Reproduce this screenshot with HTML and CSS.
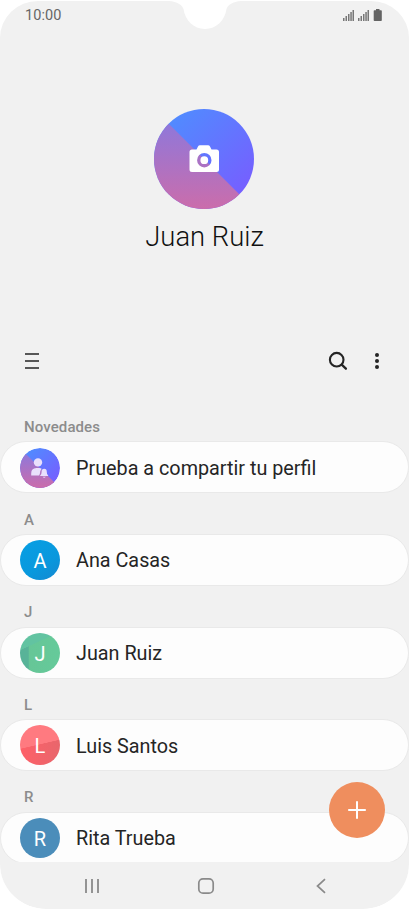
FILE: index.html
```html
<!DOCTYPE html>
<html lang="es">
<head>
<meta charset="utf-8">
<title>Contactos</title>
<link rel="stylesheet" href="styles.css">
</head>
<body>
<div class="phone">
  <svg class="notch" width="90" height="32" viewBox="0 0 90 32"><path d="M0 0H90V.8H84C76 .8 68.500 3.500 66.500 9C65 20 56.500 29 45 29S25 20 23.500 9C21.500 3.500 14 .8 6 .8H0Z" fill="#fff"/></svg>
  <header class="status">
    <span class="clock">10:00</span>
    <svg class="signals" width="42" height="14" viewBox="0 0 42 14">
      <g fill="#777"><path d="M1 10h1.500v3H1zM3.500 8H5v5H3.500zM6 6h1.500v7H6zM8.300 4h1.500v9H8.300zM10.500 2H12v11h-1.500z"/><path d="M16 10h1.500v3H16zM18.500 8H20v5h-1.500zM21 6h1.500v7H21zM23.300 4h1.500v9h-1.500zM25.500 2H27v11h-1.500z"/></g>
      <path d="M34 1h3.500v1.300h1.500q.8 0 .8.800v9.100q0 .8-.8.800h-6.500q-.8 0-.8-.8V3.100q0-.8.800-.8H34z" fill="#636363"/>
    </svg>
  </header>
  <section class="profile">
    <svg class="photo" width="100" height="100" viewBox="0 0 100 100">
      <defs>
        <linearGradient id="blue" x1="0" y1="0" x2="1" y2="1"><stop offset=".1" stop-color="#4f8dff"/><stop offset=".85" stop-color="#7560ff"/></linearGradient>
        <linearGradient id="pink" x1="0" y1="0" x2="0" y2="1"><stop offset="0" stop-color="#8579e2"/><stop offset="1" stop-color="#cb6dab"/></linearGradient>
        <clipPath id="round"><circle cx="50" cy="50" r="50"/></clipPath>
      </defs>
      <g clip-path="url(#round)"><path d="M0 0H100V100H0Z" fill="url(#blue)"/><path d="M0 0V100H100Z" fill="url(#pink)"/></g>
      <path fill="#fff" fill-rule="evenodd" d="M42.500 40.500l1.500-3q.6-1.200 2-1.200h8q1.400 0 2 1.200l1.500 3h5q2.500 0 2.500 2.500v17.500q0 2.500-2.500 2.500h-24.500q-2.500 0-2.500-2.500v-17.500q0-2.500 2.500-2.500zM50.300 44a7.200 7.200 0 1 0 0 14.400a7.200 7.200 0 1 0 0-14.400zM50.300 47.300a3.900 3.900 0 1 1 0 7.800a3.900 3.900 0 1 1 0-7.800z"/>
    </svg>
    <h1>Juan Ruiz</h1>
  </section>
  <nav class="toolbar">
    <svg width="16" height="18" viewBox="0 0 16 18"><path d="M1 2h14M1 9h14M1 16h14" stroke="#252525" stroke-width="1.400"/></svg>
    <span class="actions">
      <svg width="20" height="20" viewBox="0 0 20 20" fill="none" stroke="#252525"><circle cx="8.700" cy="8.700" r="6.800" stroke-width="2.100"/><path d="M13.700 13.700l4.200 4" stroke-width="2.300" stroke-linecap="round"/></svg>
      <svg width="6" height="20" viewBox="0 0 6 20" fill="#252525"><circle cx="3" cy="4" r="2"/><circle cx="3" cy="10" r="2"/><circle cx="3" cy="16" r="2"/></svg>
    </span>
  </nav>
  <main class="contacts">
    <h2>Novedades</h2>
    <div class="card">
      <svg class="avatar" viewBox="0 0 100 100"><g clip-path="url(#round)"><path d="M0 0H100V100H0Z" fill="url(#blue)"/><path d="M0 0V100H100Z" fill="url(#pink)"/></g><g fill="#e9e0fc"><circle cx="45" cy="36" r="10.500"/><path d="M28 69V63Q28 51 41 50H48Q52 50 54 52Q50 57 50 63L48 69Z"/><path d="M50 70Q54 67 54 60Q54 52 60.500 52T67 60Q67 67 71 70ZM56.500 72H64.500Q60.500 77 56.500 72Z"/></g></svg>
      <span class="name">Prueba a compartir tu perfil</span>
    </div>
    <h2>A</h2>
    <div class="card"><span class="avatar ana">A</span><span class="name">Ana Casas</span></div>
    <h2>J</h2>
    <div class="card"><span class="avatar juan">J</span><span class="name">Juan Ruiz</span></div>
    <h2>L</h2>
    <div class="card"><span class="avatar luis">L</span><span class="name">Luis Santos</span></div>
    <h2>R</h2>
    <div class="card"><span class="avatar rita">R</span><span class="name">Rita Trueba</span></div>
  </main>
  <div class="add"><svg width="20" height="20" viewBox="0 0 20 20"><path d="M10 1.200v17.600M1.200 10h17.600" stroke="#fff" stroke-width="2"/></svg></div>
  <footer class="keys">
    <svg width="16" height="18" viewBox="0 0 16 18"><path d="M2 2v14M8 2v14M14 2v14" stroke="#8a8a8a" stroke-width="1.800"/></svg>
    <svg class="home" width="18" height="18" viewBox="0 0 18 18"><rect x="1.800" y="1.800" width="14.400" height="14.400" rx="4.200" fill="none" stroke="#8a8a8a" stroke-width="1.700"/></svg>
    <svg width="12" height="18" viewBox="0 0 12 18"><path d="M10 2.200L2.500 9l7.500 6.800" fill="none" stroke="#8a8a8a" stroke-width="1.700"/></svg>
  </footer>
</div>
</body>
</html>
```
FILE: styles.css
```css
* { box-sizing: border-box; }
body { margin: 0; background: #fff; font-family: Roboto, sans-serif; color: #252525; }
svg { display: block; flex: none; }
.phone { position: relative; width: 409px; height: 910px; padding-top: 1px; overflow: hidden; background: #f1f1f1 content-box; border-radius: 38px 38px 46px 46px; border-bottom: 1px solid #fff; display: flex; flex-direction: column; }
.notch { position: absolute; top: 0; left: 159.500px; }
.status { height: 28px; padding: 0 26px 0 25px; display: flex; justify-content: space-between; align-items: center; }
.clock { font-size: 14.500px; color: #666; letter-spacing: .05px; }
.signals { margin-right: -1px; }
.profile { height: 311px; padding-top: 79.500px; display: flex; flex-direction: column; align-items: center; }
.photo { margin-left: -.5px; }
h1 { margin: 10px 0 0; font-size: 27.400px; line-height: 36px; font-weight: 300; color: #111; }
.toolbar { height: 42px; padding: 0 29px 0 24px; display: flex; align-items: center; justify-content: space-between; }
.actions { display: flex; gap: 26px; }
.contacts { height: 480px; padding-top: 18.800px; overflow: hidden; }
h2 { margin: 0; height: 40.600px; padding: 18.200px 24px 0; font-size: 15px; line-height: 16px; font-weight: 500; letter-spacing: .1px; color: #8c8c8c; }
.card { height: 52px; padding: 0 19px; display: flex; align-items: center; gap: 16px; background: #fdfdfd; border: 1px solid #e9e9e9; border-radius: 26px; }
.avatar { width: 40px; height: 40px; flex: none; margin-top: .4px; border-radius: 50%; display: flex; align-items: center; justify-content: center; padding-top: 2px; font-size: 20px; color: #fff; }
svg.avatar { padding: 0; }
.ana { background: linear-gradient(145deg, #079fe4, #0998dd 60%, #1588d1); }
.juan { background: linear-gradient(155deg, #62c3a1 0 29%, transparent 30%), linear-gradient(90deg, #58b398 0 21%, #66c697 22%, #65ca9a); }
.luis { background: linear-gradient(167deg, #ff7a80 0 48%, transparent 49%), linear-gradient(90deg, #ff6068, #e8666c); }
.rita { background: #4b8dba; }
.name { padding-top: 2px; font-size: 19.800px; white-space: nowrap; }
.add { position: absolute; left: 329px; top: 782.400px; width: 56px; height: 56px; border-radius: 50%; background: #ef8e5e; display: flex; align-items: center; justify-content: center; }
.keys { height: 47px; padding: 1px 82px 0 84px; display: flex; align-items: center; justify-content: space-between; }
.home { margin-right: 4px; }
```
